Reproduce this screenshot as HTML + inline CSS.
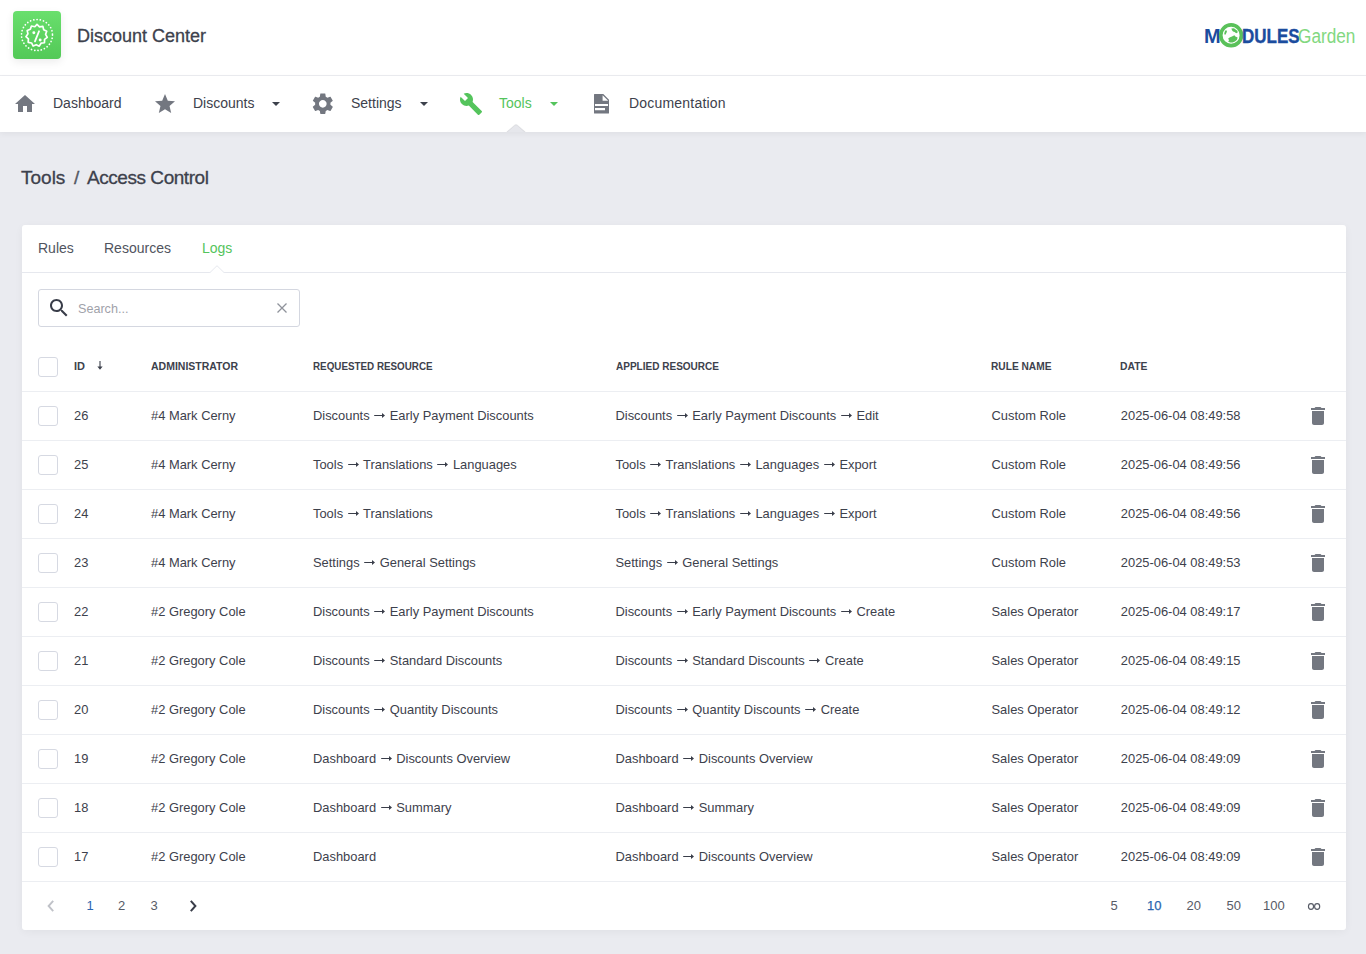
<!DOCTYPE html>
<html><head><meta charset="utf-8">
<style>
*{box-sizing:border-box;margin:0;padding:0}
html,body{width:1366px;height:954px;overflow:hidden}
body{background:#eaebf0;font-family:"Liberation Sans",sans-serif;color:#3d414c;position:relative}
#hdr{position:absolute;left:0;top:0;width:1366px;height:76px;background:#fff;border-bottom:1px solid #ebecf0}
#logo{position:absolute;left:13px;top:11px;width:48px;height:48px;border-radius:4px;background:linear-gradient(#69df6d,#53c957);box-shadow:0 3px 8px rgba(0,0,0,.08)}
#title{position:absolute;left:77px;top:26px;font-size:18px;line-height:20px;color:#3d414c;-webkit-text-stroke:0.3px #3d414c;white-space:nowrap}
#mg{position:absolute;left:1204px;top:22px;width:155px;height:28px}
#nav{position:absolute;left:0;top:76px;width:1366px;height:56px;background:#fff;box-shadow:0 2px 6px rgba(0,0,0,.05)}
.ni{position:absolute;top:0;height:56px}
.ni svg{position:absolute;top:16px;left:0;width:24px;height:24px;fill:#737780}
.nt{position:absolute;top:19px;font-size:14px;line-height:16px;color:#3d414c;white-space:nowrap}
.caret{position:absolute;top:26px;width:0;height:0;border-left:4px solid transparent;border-right:4px solid transparent;border-top:4.5px solid #3d414c}
#notch{position:absolute;left:506px;top:124px;width:20px;height:8px}
#bc{position:absolute;left:21px;top:167px;font-size:19px;line-height:22px;color:#3d414c;-webkit-text-stroke:0.3px #3d414c;white-space:nowrap}
#card{position:absolute;left:22px;top:225px;width:1324px;height:705px;background:#fff;border-radius:3px;box-shadow:0 2px 8px rgba(0,0,0,.045)}
#tabs{position:absolute;left:0;top:0;width:1324px;height:48px;border-bottom:1px solid #e6e8ee}
.tab{position:absolute;top:15px;font-size:14px;line-height:16px;color:#50545e;white-space:nowrap}
#tnotch{position:absolute;left:187px;top:40px;width:16px;height:9px}
#search{position:absolute;left:16px;top:64px;width:262px;height:38px;border:1px solid #d4d7e0;border-radius:3px}
#search .ph{position:absolute;left:39px;top:12px;font-size:12.6px;line-height:14px;color:#9fa2aa;white-space:nowrap}
#search svg{position:absolute}
.row{position:absolute;left:0;width:1324px;height:49px;border-bottom:1px solid #eceef2}
.cb{position:absolute;left:16px;top:14px;width:20px;height:20px;border:1.3px solid #d6d9e2;border-radius:3px;background:#fff}
.c{position:absolute;top:16px;font-size:12.9px;line-height:15px;color:#3d414c;white-space:nowrap}
.h{position:absolute;top:19px;font-size:11.5px;line-height:13px;font-weight:bold;transform-origin:0 0;color:#3d414c;white-space:nowrap}
.sort{position:absolute;top:20px;width:6px;height:9px;fill:#3d414c}
.ar{vertical-align:1.5px}
.trash{position:absolute;left:1284px;top:12px;width:24px;height:24px;fill:#737780}
.pg{position:absolute;top:673px;font-size:13px;line-height:15px;color:#575b66;white-space:nowrap}
</style></head><body>
<div id="hdr">
  <div id="logo"><svg width="48" height="48" viewBox="0 0 48 48" style="position:absolute;left:0;top:0">
<circle cx="24" cy="24" r="15.5" fill="none" stroke="#fff" stroke-width="1.7" stroke-dasharray="0.1 3.2" stroke-linecap="round"/>
<g transform="translate(24,24.3) scale(1.13) translate(-24,-23.1)"><path d="M24 13.5 L26.2 15.6 L29.2 15.2 L29.9 18.1 L32.6 19.5 L31.6 22.3 L33.1 24.9 L30.7 26.7 L30.6 29.7 L27.6 30.1 L26 32.7 L23.3 31.4 L20.6 32.6 L19.2 29.9 L16.2 29.3 L16.4 26.3 L14.2 24.3 L16 21.8 L15.3 18.9 L18.1 17.8 L19.1 14.9 L22.1 15.5 Z" fill="none" stroke="#fff" stroke-width="1.5" stroke-linejoin="round"/>
<path d="M25.8 19.5 L22.2 28.5" stroke="#fff" stroke-width="1.6" stroke-linecap="round"/>
<circle cx="21.2" cy="20.8" r="1.3" fill="#fff"/><circle cx="26.8" cy="27.2" r="1.3" fill="#fff"/></g>
</svg></div>
  <div id="title">Discount Center</div>
  <div id="mg">
    <div style="position:absolute;left:0px;top:4px;font-size:20px;line-height:20px;font-weight:bold;color:#1b4c9e">M</div>
    <svg style="position:absolute;left:14px;top:0" width="26" height="27" viewBox="0 0 26 27"><circle cx="13.1" cy="13.3" r="10.35" fill="#fff" stroke="#5ac15a" stroke-width="3.7"/><path fill="#5ac15a" d="M7.6 8.2 L9 8.8 L8.6 10.6 L7.4 12.8 L6.2 12.2 L6.6 10Z M13.4 6.4 L16 6.2 L17.6 7.6 L19.4 8.8 L19.7 10.6 L18.2 11.2 L16.6 10 L15 9.6 L14 8.2Z M10.2 16.6 L12 15.2 L14 14.6 L16.4 13.3 L17.4 14.6 L19.6 15.4 L19 17.8 L17 19.4 L14.6 20.4 L12.2 20.6 L10.2 19.8 L11 18.2Z"/></svg>
    <div style="position:absolute;left:38px;top:4px;font-size:20px;line-height:20px;font-weight:bold;color:#1b4c9e;-webkit-text-stroke:0.35px #1b4c9e;transform:scaleX(0.85);transform-origin:0 0">DULES</div>
    <div style="position:absolute;left:94.3px;top:4px;font-size:20px;line-height:20px;color:#82d880;transform:scaleX(0.86);transform-origin:0 0">Garden</div>
  </div>
</div>
<div id="nav">
  <div class="ni" style="left:13px">
    <svg viewBox="0 0 24 24"><path d="M10 20v-6h4v6h5v-8h3L12 3 2 12h3v8z"/></svg>
    <div class="nt" style="left:40px">Dashboard</div>
  </div>
  <div class="ni" style="left:153px">
    <svg viewBox="0 0 24 24"><path d="M12 17.27L18.18 21l-1.64-7.03L22 9.24l-7.19-.61L12 2 9.19 8.63 2 9.24l5.46 4.73L5.82 21z"/></svg>
    <div class="nt" style="left:40px">Discounts</div>
    <div class="caret" style="left:118.5px"></div>
  </div>
  <div class="ni" style="left:311px">
    <svg viewBox="0 0 24 24" style="width:25.6px;height:25.6px;left:-0.6px;top:15.2px"><path d="M19.14 12.94c.04-.3.06-.61.06-.94 0-.32-.02-.64-.07-.94l2.03-1.58c.18-.14.23-.41.12-.61l-1.92-3.32c-.12-.22-.37-.29-.59-.22l-2.39.96c-.5-.38-1.03-.7-1.62-.94l-.36-2.54c-.04-.24-.24-.41-.48-.41h-3.84c-.24 0-.43.17-.47.41l-.36 2.54c-.59.24-1.13.57-1.62.94l-2.39-.96c-.22-.08-.47 0-.59.22L2.740 8.87c-.12.21-.08.47.12.61l2.03 1.58c-.05.3-.09.63-.09.94s.02.64.07.94l-2.03 1.58c-.18.14-.23.41-.12.61l1.920 3.32c.12.22.37.29.59.22l2.39-.96c.5.38 1.03.7 1.62.94l.36 2.54c.05.24.24.41.48.41h3.84c.24 0 .44-.17.47-.41l.36-2.54c.59-.24 1.13-.56 1.62-.94l2.39.96c.22.08.47 0 .59-.22l1.92-3.32c.12-.22.07-.47-.12-.61l-2.01-1.58zM12 15.6c-1.98 0-3.6-1.62-3.6-3.6s1.62-3.6 3.6-3.6 3.6 1.62 3.6 3.6-1.620 3.6-3.6 3.6z"/></svg>
    <div class="nt" style="left:40px">Settings</div>
    <div class="caret" style="left:108.5px"></div>
  </div>
  <div class="ni" style="left:459px">
    <svg viewBox="0 0 24 24" style="fill:#54c45c"><path d="M22.7 19l-9.1-9.1c.9-2.3.4-5-1.5-6.9-2-2-5-2.4-7.4-1.3L9 6 6 9 1.6 4.7C.4 7.1.9 10.1 2.9 12.1c1.9 1.9 4.6 2.4 6.9 1.5l9.1 9.1c.4.4 1 .4 1.4 0l2.3-2.3c.5-.4.5-1.1.1-1.4z"/></svg>
    <div class="nt" style="left:40px;color:#54c45c">Tools</div>
    <div class="caret" style="left:90.5px;border-top-color:#54c45c"></div>
  </div>
  <div class="ni" style="left:589px">
    <svg viewBox="0 0 24 24"><path fill-rule="evenodd" d="M5.6 2H14.3L20 7.7V20.9Q20 21.5 19.4 21.5H5.6Q5 21.5 5 20.9V2.6Q5 2 5.6 2Z M13.6 3.2V8.8H19.2Z M6 12H19V14.1H6Z M6 15.9H16V18.2H6Z"/></svg>
    <div class="nt" style="left:40px;letter-spacing:0.2px">Documentation</div>
  </div>
</div>
<svg id="notch" viewBox="0 0 20 8"><path d="M0.5 8 L8.6 1.2 Q10 0 11.4 1.2 L19.5 8 Z" fill="#e6e7ec"/><path d="M0.8 8 L8.6 1.3 Q10 0.1 11.4 1.3 L19.2 8" fill="none" stroke="rgba(0,0,0,.05)" stroke-width="1.2"/></svg>
<div id="bc">Tools</div><div id="bc" style="left:74px;color:#5a5e69">/</div><div id="bc" style="left:87px;letter-spacing:-0.45px">Access Control</div>
<div id="card">
  <div id="tabs">
    <div class="tab" style="left:16px">Rules</div>
    <div class="tab" style="left:82px">Resources</div>
    <div class="tab" style="left:180px;color:#54c45c">Logs</div>
  </div>
  <svg id="tnotch" viewBox="0 0 16 9"><path d="M0 8.5 L8 0.7 L16 8.5" fill="#fff" stroke="#e6e8ee" stroke-width="1"/><rect x="0" y="8" width="16" height="2" fill="#fff"/></svg>
  <div id="search">
    <svg style="left:8px;top:6px" width="24" height="24" viewBox="0 0 24 24"><path fill="#393d49" d="M15.5 14h-.79l-.28-.27C15.41 12.59 16 11.11 16 9.5 16 5.91 13.09 3 9.5 3S3 5.91 3 9.5 5.91 16 9.5 16c1.61 0 3.09-.59 4.23-1.57l.27.28v.79l5 4.99L20.49 19l-4.99-5zm-6 0C7.01 14 5 11.99 5 9.5S7.01 5 9.5 5 14 7.01 14 9.5 11.99 14 9.5 14z"/></svg>
    <div class="ph">Search...</div>
    <svg style="left:238px;top:13px" width="10" height="10" viewBox="0 0 10 10"><path d="M0.5 0.5 L9.5 9.5 M9.5 0.5 L0.5 9.5" stroke="#8f929b" stroke-width="1.3"/></svg>
  </div>
  <div class="row" style="top:116px;height:51px"><div class="cb" style="top:16px"></div><div class="h" style="left:52px;transform:scaleX(0.9565)">ID</div><div class="h" style="left:129px;transform:scaleX(0.9129)">ADMINISTRATOR</div><div class="h" style="left:291px;transform:scaleX(0.8547)">REQUESTED RESOURCE</div><div class="h" style="left:593.5px;transform:scaleX(0.8713)">APPLIED RESOURCE</div><div class="h" style="left:968.5px;transform:scaleX(0.8848)">RULE NAME</div><div class="h" style="left:1097.8px;transform:scaleX(0.8997)">DATE</div><svg class="sort" viewBox="0 0 6 9" style="left:75px"><path d="M2.45 0h1.1v5.6h2.1L3 8.7 0.35 5.6h2.1z"/></svg></div><div class="row" style="top:167px"><div class="cb"></div><div class="c" style="left:52px">26</div><div class="c" style="left:129px">#4 Mark Cerny</div><div class="c" style="left:291px">Discounts <svg class="ar" width="13" height="7" viewBox="0 0 13 7"><path d="M1.2 3.5H10.5" stroke="#393d49" stroke-width="1"/><path d="M9 1.1L12 3.5 9 5.9z" fill="#393d49"/></svg> Early Payment Discounts</div><div class="c" style="left:593.5px">Discounts <svg class="ar" width="13" height="7" viewBox="0 0 13 7"><path d="M1.2 3.5H10.5" stroke="#393d49" stroke-width="1"/><path d="M9 1.1L12 3.5 9 5.9z" fill="#393d49"/></svg> Early Payment Discounts <svg class="ar" width="13" height="7" viewBox="0 0 13 7"><path d="M1.2 3.5H10.5" stroke="#393d49" stroke-width="1"/><path d="M9 1.1L12 3.5 9 5.9z" fill="#393d49"/></svg> Edit</div><div class="c" style="left:969.5px">Custom Role</div><div class="c" style="left:1098.8px">2025-06-04 08:49:58</div><svg class="trash" viewBox="0 0 24 24"><path d="M6 19c0 1.1.9 2 2 2h8c1.1 0 2-.9 2-2V7H6v12zM19 4h-3.5l-1-1h-5l-1 1H5v2h14V4z"/></svg></div><div class="row" style="top:216px"><div class="cb"></div><div class="c" style="left:52px">25</div><div class="c" style="left:129px">#4 Mark Cerny</div><div class="c" style="left:291px">Tools <svg class="ar" width="13" height="7" viewBox="0 0 13 7"><path d="M1.2 3.5H10.5" stroke="#393d49" stroke-width="1"/><path d="M9 1.1L12 3.5 9 5.9z" fill="#393d49"/></svg> Translations <svg class="ar" width="13" height="7" viewBox="0 0 13 7"><path d="M1.2 3.5H10.5" stroke="#393d49" stroke-width="1"/><path d="M9 1.1L12 3.5 9 5.9z" fill="#393d49"/></svg> Languages</div><div class="c" style="left:593.5px">Tools <svg class="ar" width="13" height="7" viewBox="0 0 13 7"><path d="M1.2 3.5H10.5" stroke="#393d49" stroke-width="1"/><path d="M9 1.1L12 3.5 9 5.9z" fill="#393d49"/></svg> Translations <svg class="ar" width="13" height="7" viewBox="0 0 13 7"><path d="M1.2 3.5H10.5" stroke="#393d49" stroke-width="1"/><path d="M9 1.1L12 3.5 9 5.9z" fill="#393d49"/></svg> Languages <svg class="ar" width="13" height="7" viewBox="0 0 13 7"><path d="M1.2 3.5H10.5" stroke="#393d49" stroke-width="1"/><path d="M9 1.1L12 3.5 9 5.9z" fill="#393d49"/></svg> Export</div><div class="c" style="left:969.5px">Custom Role</div><div class="c" style="left:1098.8px">2025-06-04 08:49:56</div><svg class="trash" viewBox="0 0 24 24"><path d="M6 19c0 1.1.9 2 2 2h8c1.1 0 2-.9 2-2V7H6v12zM19 4h-3.5l-1-1h-5l-1 1H5v2h14V4z"/></svg></div><div class="row" style="top:265px"><div class="cb"></div><div class="c" style="left:52px">24</div><div class="c" style="left:129px">#4 Mark Cerny</div><div class="c" style="left:291px">Tools <svg class="ar" width="13" height="7" viewBox="0 0 13 7"><path d="M1.2 3.5H10.5" stroke="#393d49" stroke-width="1"/><path d="M9 1.1L12 3.5 9 5.9z" fill="#393d49"/></svg> Translations</div><div class="c" style="left:593.5px">Tools <svg class="ar" width="13" height="7" viewBox="0 0 13 7"><path d="M1.2 3.5H10.5" stroke="#393d49" stroke-width="1"/><path d="M9 1.1L12 3.5 9 5.9z" fill="#393d49"/></svg> Translations <svg class="ar" width="13" height="7" viewBox="0 0 13 7"><path d="M1.2 3.5H10.5" stroke="#393d49" stroke-width="1"/><path d="M9 1.1L12 3.5 9 5.9z" fill="#393d49"/></svg> Languages <svg class="ar" width="13" height="7" viewBox="0 0 13 7"><path d="M1.2 3.5H10.5" stroke="#393d49" stroke-width="1"/><path d="M9 1.1L12 3.5 9 5.9z" fill="#393d49"/></svg> Export</div><div class="c" style="left:969.5px">Custom Role</div><div class="c" style="left:1098.8px">2025-06-04 08:49:56</div><svg class="trash" viewBox="0 0 24 24"><path d="M6 19c0 1.1.9 2 2 2h8c1.1 0 2-.9 2-2V7H6v12zM19 4h-3.5l-1-1h-5l-1 1H5v2h14V4z"/></svg></div><div class="row" style="top:314px"><div class="cb"></div><div class="c" style="left:52px">23</div><div class="c" style="left:129px">#4 Mark Cerny</div><div class="c" style="left:291px">Settings <svg class="ar" width="13" height="7" viewBox="0 0 13 7"><path d="M1.2 3.5H10.5" stroke="#393d49" stroke-width="1"/><path d="M9 1.1L12 3.5 9 5.9z" fill="#393d49"/></svg> General Settings</div><div class="c" style="left:593.5px">Settings <svg class="ar" width="13" height="7" viewBox="0 0 13 7"><path d="M1.2 3.5H10.5" stroke="#393d49" stroke-width="1"/><path d="M9 1.1L12 3.5 9 5.9z" fill="#393d49"/></svg> General Settings</div><div class="c" style="left:969.5px">Custom Role</div><div class="c" style="left:1098.8px">2025-06-04 08:49:53</div><svg class="trash" viewBox="0 0 24 24"><path d="M6 19c0 1.1.9 2 2 2h8c1.1 0 2-.9 2-2V7H6v12zM19 4h-3.5l-1-1h-5l-1 1H5v2h14V4z"/></svg></div><div class="row" style="top:363px"><div class="cb"></div><div class="c" style="left:52px">22</div><div class="c" style="left:129px">#2 Gregory Cole</div><div class="c" style="left:291px">Discounts <svg class="ar" width="13" height="7" viewBox="0 0 13 7"><path d="M1.2 3.5H10.5" stroke="#393d49" stroke-width="1"/><path d="M9 1.1L12 3.5 9 5.9z" fill="#393d49"/></svg> Early Payment Discounts</div><div class="c" style="left:593.5px">Discounts <svg class="ar" width="13" height="7" viewBox="0 0 13 7"><path d="M1.2 3.5H10.5" stroke="#393d49" stroke-width="1"/><path d="M9 1.1L12 3.5 9 5.9z" fill="#393d49"/></svg> Early Payment Discounts <svg class="ar" width="13" height="7" viewBox="0 0 13 7"><path d="M1.2 3.5H10.5" stroke="#393d49" stroke-width="1"/><path d="M9 1.1L12 3.5 9 5.9z" fill="#393d49"/></svg> Create</div><div class="c" style="left:969.5px">Sales Operator</div><div class="c" style="left:1098.8px">2025-06-04 08:49:17</div><svg class="trash" viewBox="0 0 24 24"><path d="M6 19c0 1.1.9 2 2 2h8c1.1 0 2-.9 2-2V7H6v12zM19 4h-3.5l-1-1h-5l-1 1H5v2h14V4z"/></svg></div><div class="row" style="top:412px"><div class="cb"></div><div class="c" style="left:52px">21</div><div class="c" style="left:129px">#2 Gregory Cole</div><div class="c" style="left:291px">Discounts <svg class="ar" width="13" height="7" viewBox="0 0 13 7"><path d="M1.2 3.5H10.5" stroke="#393d49" stroke-width="1"/><path d="M9 1.1L12 3.5 9 5.9z" fill="#393d49"/></svg> Standard Discounts</div><div class="c" style="left:593.5px">Discounts <svg class="ar" width="13" height="7" viewBox="0 0 13 7"><path d="M1.2 3.5H10.5" stroke="#393d49" stroke-width="1"/><path d="M9 1.1L12 3.5 9 5.9z" fill="#393d49"/></svg> Standard Discounts <svg class="ar" width="13" height="7" viewBox="0 0 13 7"><path d="M1.2 3.5H10.5" stroke="#393d49" stroke-width="1"/><path d="M9 1.1L12 3.5 9 5.9z" fill="#393d49"/></svg> Create</div><div class="c" style="left:969.5px">Sales Operator</div><div class="c" style="left:1098.8px">2025-06-04 08:49:15</div><svg class="trash" viewBox="0 0 24 24"><path d="M6 19c0 1.1.9 2 2 2h8c1.1 0 2-.9 2-2V7H6v12zM19 4h-3.5l-1-1h-5l-1 1H5v2h14V4z"/></svg></div><div class="row" style="top:461px"><div class="cb"></div><div class="c" style="left:52px">20</div><div class="c" style="left:129px">#2 Gregory Cole</div><div class="c" style="left:291px">Discounts <svg class="ar" width="13" height="7" viewBox="0 0 13 7"><path d="M1.2 3.5H10.5" stroke="#393d49" stroke-width="1"/><path d="M9 1.1L12 3.5 9 5.9z" fill="#393d49"/></svg> Quantity Discounts</div><div class="c" style="left:593.5px">Discounts <svg class="ar" width="13" height="7" viewBox="0 0 13 7"><path d="M1.2 3.5H10.5" stroke="#393d49" stroke-width="1"/><path d="M9 1.1L12 3.5 9 5.9z" fill="#393d49"/></svg> Quantity Discounts <svg class="ar" width="13" height="7" viewBox="0 0 13 7"><path d="M1.2 3.5H10.5" stroke="#393d49" stroke-width="1"/><path d="M9 1.1L12 3.5 9 5.9z" fill="#393d49"/></svg> Create</div><div class="c" style="left:969.5px">Sales Operator</div><div class="c" style="left:1098.8px">2025-06-04 08:49:12</div><svg class="trash" viewBox="0 0 24 24"><path d="M6 19c0 1.1.9 2 2 2h8c1.1 0 2-.9 2-2V7H6v12zM19 4h-3.5l-1-1h-5l-1 1H5v2h14V4z"/></svg></div><div class="row" style="top:510px"><div class="cb"></div><div class="c" style="left:52px">19</div><div class="c" style="left:129px">#2 Gregory Cole</div><div class="c" style="left:291px">Dashboard <svg class="ar" width="13" height="7" viewBox="0 0 13 7"><path d="M1.2 3.5H10.5" stroke="#393d49" stroke-width="1"/><path d="M9 1.1L12 3.5 9 5.9z" fill="#393d49"/></svg> Discounts Overview</div><div class="c" style="left:593.5px">Dashboard <svg class="ar" width="13" height="7" viewBox="0 0 13 7"><path d="M1.2 3.5H10.5" stroke="#393d49" stroke-width="1"/><path d="M9 1.1L12 3.5 9 5.9z" fill="#393d49"/></svg> Discounts Overview</div><div class="c" style="left:969.5px">Sales Operator</div><div class="c" style="left:1098.8px">2025-06-04 08:49:09</div><svg class="trash" viewBox="0 0 24 24"><path d="M6 19c0 1.1.9 2 2 2h8c1.1 0 2-.9 2-2V7H6v12zM19 4h-3.5l-1-1h-5l-1 1H5v2h14V4z"/></svg></div><div class="row" style="top:559px"><div class="cb"></div><div class="c" style="left:52px">18</div><div class="c" style="left:129px">#2 Gregory Cole</div><div class="c" style="left:291px">Dashboard <svg class="ar" width="13" height="7" viewBox="0 0 13 7"><path d="M1.2 3.5H10.5" stroke="#393d49" stroke-width="1"/><path d="M9 1.1L12 3.5 9 5.9z" fill="#393d49"/></svg> Summary</div><div class="c" style="left:593.5px">Dashboard <svg class="ar" width="13" height="7" viewBox="0 0 13 7"><path d="M1.2 3.5H10.5" stroke="#393d49" stroke-width="1"/><path d="M9 1.1L12 3.5 9 5.9z" fill="#393d49"/></svg> Summary</div><div class="c" style="left:969.5px">Sales Operator</div><div class="c" style="left:1098.8px">2025-06-04 08:49:09</div><svg class="trash" viewBox="0 0 24 24"><path d="M6 19c0 1.1.9 2 2 2h8c1.1 0 2-.9 2-2V7H6v12zM19 4h-3.5l-1-1h-5l-1 1H5v2h14V4z"/></svg></div><div class="row" style="top:608px"><div class="cb"></div><div class="c" style="left:52px">17</div><div class="c" style="left:129px">#2 Gregory Cole</div><div class="c" style="left:291px">Dashboard</div><div class="c" style="left:593.5px">Dashboard <svg class="ar" width="13" height="7" viewBox="0 0 13 7"><path d="M1.2 3.5H10.5" stroke="#393d49" stroke-width="1"/><path d="M9 1.1L12 3.5 9 5.9z" fill="#393d49"/></svg> Discounts Overview</div><div class="c" style="left:969.5px">Sales Operator</div><div class="c" style="left:1098.8px">2025-06-04 08:49:09</div><svg class="trash" viewBox="0 0 24 24"><path d="M6 19c0 1.1.9 2 2 2h8c1.1 0 2-.9 2-2V7H6v12zM19 4h-3.5l-1-1h-5l-1 1H5v2h14V4z"/></svg></div>
  <svg style="position:absolute;left:22.5px;top:674px" width="12" height="14" viewBox="0 0 12 14"><path d="M8.2 1.8 L3.6 7 L8.2 12.2" fill="none" stroke="#c0c2c8" stroke-width="1.9"/></svg>
  <div class="pg" style="left:64.5px;color:#2a66b0">1</div>
  <div class="pg" style="left:96px">2</div>
  <div class="pg" style="left:128.5px">3</div>
  <svg style="position:absolute;left:165px;top:674px" width="12" height="14" viewBox="0 0 12 14"><path d="M3.8 1.8 L8.4 7 L3.8 12.2" fill="none" stroke="#393d49" stroke-width="2"/></svg>
  <div class="pg" style="left:1088.5px">5</div>
  <div class="pg" style="left:1125px;color:#2a66b0;-webkit-text-stroke:0.25px #2a66b0">10</div>
  <div class="pg" style="left:1164.5px">20</div>
  <div class="pg" style="left:1204.5px">50</div>
  <div class="pg" style="left:1241px">100</div>
  <svg style="position:absolute;left:1284px;top:676px" width="16" height="10" viewBox="0 0 16 10"><ellipse cx="5" cy="5.45" rx="2.55" ry="2.9" fill="none" stroke="#575b66" stroke-width="1.15"/><ellipse cx="11.15" cy="5.45" rx="2.55" ry="2.9" fill="none" stroke="#575b66" stroke-width="1.15"/></svg>
</div>
</body></html>
